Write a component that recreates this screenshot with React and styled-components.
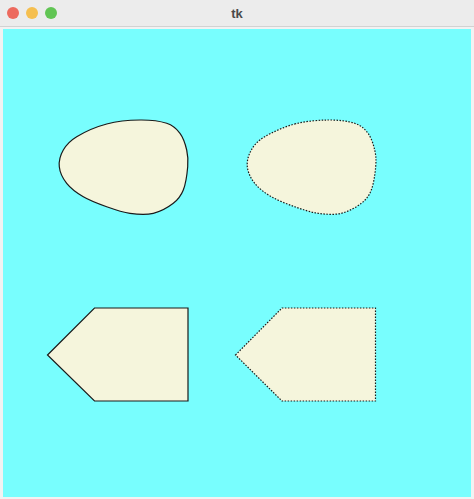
import styled, { createGlobalStyle } from "styled-components";

const GlobalStyle = createGlobalStyle`
  html, body {
    margin: 0;
    padding: 0;
    background: #e6e6e6;
    font-family: "Liberation Sans", Arial, sans-serif;
  }
`;

const Window = styled.div`
  width: 474px;
  height: 499px;
  display: flex;
  flex-direction: column;
  background: #ececec;
  overflow: hidden;
`;

const TitleBar = styled.div`
  height: 26px;
  flex: none;
  display: flex;
  align-items: center;
  position: relative;
  background: #ececec;
  border-bottom: 1px solid #d2d2d2;
`;

const Lights = styled.div`
  display: flex;
  gap: 7px;
  padding-left: 7px;
`;

const Light = styled.span`
  width: 12px;
  height: 12px;
  border-radius: 50%;
  background: ${(p) => p.color};
`;

const Title = styled.div`
  position: absolute;
  left: 0;
  right: 0;
  text-align: center;
  font-size: 13px;
  font-weight: bold;
  color: #4a4a4a;
`;

const Body = styled.div`
  flex: 1;
  padding: 2px 3px 2px 3px;
  background: #f2f2f2;
`;

const Canvas = styled.svg`
  display: block;
  width: 468px;
  height: 468px;
  background: #78fefe;
`;

const eggPoints = [
  [106.7, 124], [140, 120], [166.7, 123.3], [180, 133.3], [186.7, 150],
  [187.7, 166.7], [183.3, 190], [173.3, 203.3], [153.3, 213.3], [130, 213.3],
  [106.7, 206.7], [83.3, 196.7], [66.7, 183.3], [59.3, 166.7], [63.3, 150],
  [76.7, 136.7],
];

// closed catmull-rom -> cubic beziers
const smoothPath = (pts, dx = 0) => {
  const p = pts.map(([x, y]) => [x + dx, y]);
  const n = p.length;
  let d = `M${p[0][0]},${p[0][1]}`;
  for (let i = 0; i < n; i++) {
    const p0 = p[(i - 1 + n) % n];
    const p1 = p[i];
    const p2 = p[(i + 1) % n];
    const p3 = p[(i + 2) % n];
    const c1 = [p1[0] + (p2[0] - p0[0]) / 6, p1[1] + (p2[1] - p0[1]) / 6];
    const c2 = [p2[0] - (p3[0] - p1[0]) / 6, p2[1] - (p3[1] - p1[1]) / 6];
    d += ` C${c1[0]},${c1[1]} ${c2[0]},${c2[1]} ${p2[0]},${p2[1]}`;
  }
  return d + "Z";
};

const FILL = "#f5f5dc";
const LINE = "#1a1a1a";

const App = () => (
  <>
    <GlobalStyle />
    <Window>
      <TitleBar>
        <Lights>
          <Light color="#ed6a5e" />
          <Light color="#f5bf4f" />
          <Light color="#61c554" />
        </Lights>
        <Title>tk</Title>
      </TitleBar>
      <Body>
        <Canvas viewBox="3 29 468 468">
          <path d={smoothPath(eggPoints)} fill={FILL} stroke={LINE} strokeWidth="1.2" />
          <path
            d={smoothPath(eggPoints, 188)}
            fill={FILL}
            stroke={LINE}
            strokeWidth="1.2"
            strokeDasharray="1.5 1.5"
          />
          <polygon
            points="47.5,355 94.5,308 188,308 188,401 94.5,401"
            fill={FILL}
            stroke={LINE}
            strokeWidth="1.2"
          />
          <polygon
            points="235.5,355 282,308 375.5,308 375.5,401 282,401"
            fill={FILL}
            stroke={LINE}
            strokeWidth="1.2"
            strokeDasharray="1.5 1.5"
          />
        </Canvas>
      </Body>
    </Window>
  </>
);

export default App;
